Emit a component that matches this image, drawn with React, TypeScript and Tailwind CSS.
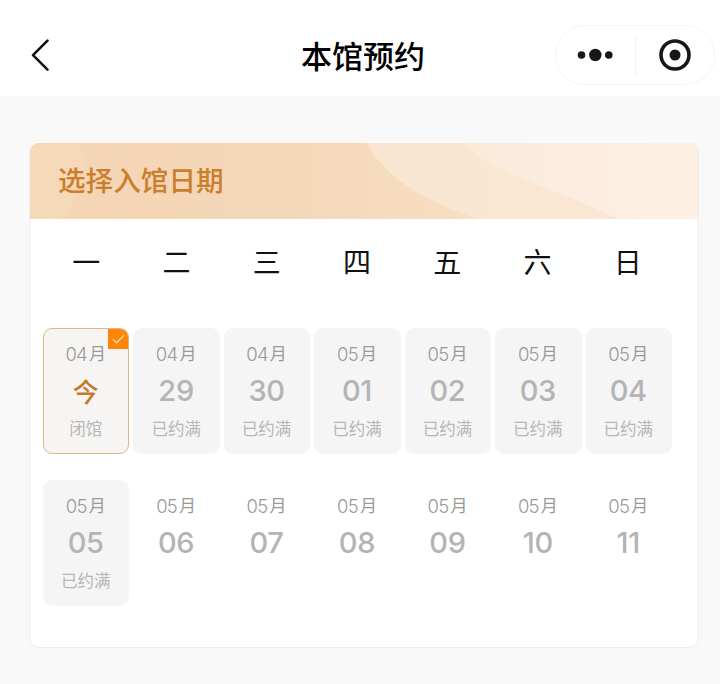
type Day = { month: string; day: string; status?: string; selected?: boolean };

const weekdays = ['一', '二', '三', '四', '五', '六', '日'];

const days: Day[] = [
  { month: '04', day: '今', status: '闭馆', selected: true },
  { month: '04', day: '29', status: '已约满' },
  { month: '04', day: '30', status: '已约满' },
  { month: '05', day: '01', status: '已约满' },
  { month: '05', day: '02', status: '已约满' },
  { month: '05', day: '03', status: '已约满' },
  { month: '05', day: '04', status: '已约满' },
  { month: '05', day: '05', status: '已约满' },
  { month: '05', day: '06' },
  { month: '05', day: '07' },
  { month: '05', day: '08' },
  { month: '05', day: '09' },
  { month: '05', day: '10' },
  { month: '05', day: '11' },
];

function NavBar() {
  return (
    <header className="flex h-[96px] items-center justify-between bg-white pt-[14px] pr-[5px] pl-[30px]">
      <div className="w-[160px]">
        <svg width="20" height="34" viewBox="0 0 20 34" fill="none" className="text-[#111]">
          <path d="M17.5 2.7 3 17.2l14.5 14.5" stroke="currentColor" strokeWidth="2.6" strokeLinecap="round" strokeLinejoin="round" />
        </svg>
      </div>
      <h1 className="mr-[19px] pt-[3px] text-[31px] leading-10 font-medium text-black">本馆预约</h1>
      <div className="flex h-[60px] w-[160px] items-center rounded-full border border-[#f5f5f5]">
        <div className="flex flex-1 items-center justify-center text-[#171717]">
          <svg width="36" height="14" viewBox="0 0 36 14" fill="currentColor">
            <circle cx="4.5" cy="7" r="3.8" />
            <circle cx="18.3" cy="7" r="6.2" />
            <circle cx="31.8" cy="7" r="3.8" />
          </svg>
        </div>
        <div className="h-10 w-px bg-[#f2f2f2]" />
        <div className="flex flex-1 items-center justify-center text-[#171717]">
          <svg width="32" height="32" viewBox="0 0 32 32">
            <circle cx="16" cy="16" r="14" fill="none" stroke="currentColor" strokeWidth="3.6" />
            <circle cx="16" cy="16" r="5.5" fill="currentColor" />
          </svg>
        </div>
      </div>
    </header>
  );
}

function DayCell({ month, day, status, selected }: Day) {
  return (
    <div
      className={`relative flex h-[126px] flex-col items-center overflow-hidden rounded-[9px] border pt-3 pr-px ${
        selected ? 'border-[#dfb981] bg-[#f6f5f4]' : status ? 'border-[#f5f5f5] bg-[#f5f5f5]' : 'border-transparent'
      }`}
    >
      <div className="flex h-7 items-center gap-[2px] text-[#999]">
        <span className="text-[18.5px] font-light tracking-[-0.04em]">{month}</span>
        <span className="text-[17px]">月</span>
      </div>
      <div
        className={`flex h-[44px] items-center ${
          selected ? 'pt-[2px] text-[26px] font-medium text-[#c47a2c]' : 'text-[29px] font-medium tracking-[-0.01em] text-[#b4b4b4]'
        }`}
      >
        {day}
      </div>
      {status && <div className="flex h-[33px] items-center text-[16.5px] text-[#b6b6b6]">{status}</div>}
      {selected && (
        <div className="absolute -top-px -right-px flex h-[21px] w-[21px] items-center justify-center bg-[#ff8509]">
          <svg width="13" height="10" viewBox="0 0 13 10" fill="none">
            <path d="M1 5.2 4.6 8.7 12 1.2" stroke="#ffd8a8" strokeWidth="1.4" />
          </svg>
        </div>
      )}
    </div>
  );
}

function Banner() {
  return (
    <div className="relative flex h-[76px] items-center overflow-hidden bg-[#f4d7b8] pl-7">
      <svg className="absolute inset-0" width="669" height="76" viewBox="0 0 669 76" preserveAspectRatio="none">
        <defs>
          <linearGradient id="base" x1="0" x2="1">
            <stop offset="0" stopColor="#f5d9b9" />
            <stop offset="0.35" stopColor="#f4d7b9" />
            <stop offset="0.68" stopColor="#f8dec3" />
          </linearGradient>
          <linearGradient id="fade" x1="0" x2="1">
            <stop offset="0" stopColor="#f3d2b2" stopOpacity="0.4" />
            <stop offset="1" stopColor="#f3d2b2" stopOpacity="0" />
          </linearGradient>
          <linearGradient id="mid" x1="0" x2="1">
            <stop offset="0" stopColor="#f8e6d2" />
            <stop offset="1" stopColor="#fbe6d4" />
          </linearGradient>
          <linearGradient id="light" x1="0" x2="1">
            <stop offset="0" stopColor="#fbeada" />
            <stop offset="0.5" stopColor="#fcede0" />
            <stop offset="1" stopColor="#fdf0e3" />
          </linearGradient>
        </defs>
        <rect width="669" height="76" fill="url(#base)" />
        <path d="M50 0C60 24 51 53 32 76H330V0Z" fill="url(#fade)" />
        <path d="M337 0C354 35 400 61 448 76H669V0Z" fill="url(#mid)" />
        <path d="M436 0C458 31 524 44 588 76H669V0Z" fill="url(#light)" />
      </svg>
      <h2 className="relative text-[27.6px] leading-10 font-medium text-[#cb7e2b]">选择入馆日期</h2>
    </div>
  );
}

export default function App() {
  return (
    <div className="h-[684px] w-[720px] overflow-hidden bg-[#f9f9f9] font-['Inter','Noto_Sans_CJK_SC',sans-serif]">
      <NavBar />
      <main className="pt-[47px] pl-[29px]">
        <section className="h-[505px] w-[670px] overflow-hidden rounded-[10px] border border-t-0 border-[#eee] bg-white">
          <Banner />
          <div className="grid w-[656px] grid-cols-7 gap-x-1 pt-6 pr-[15px] pl-[13px]">
            {weekdays.map((name) => (
              <div key={name} className="text-center text-[28px] leading-10 text-[#111]">
                {name}
              </div>
            ))}
          </div>
          <div className="mt-[45px] grid w-[656px] grid-cols-7 gap-x-1 gap-y-[26px] pr-[14px] pl-[13px]">
            {days.map((item) => (
              <DayCell key={item.month + item.day} {...item} />
            ))}
          </div>
        </section>
      </main>
    </div>
  );
}
